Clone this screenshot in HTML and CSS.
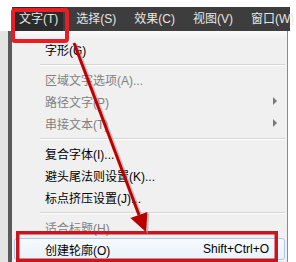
FILE: index.html
```html
<!DOCTYPE html>
<html>
<head>
<meta charset="utf-8">
<link rel="stylesheet" href="styles.css">
</head>
<body>
<div class="top"></div>
<div class="menubar">
  <span class="mb-item active">文字(T)</span>
  <span class="mb-item">选择(S)</span>
  <span class="mb-item">效果(C)</span>
  <span class="mb-item">视图(V)</span>
  <span class="mb-item">窗口(W)</span>
</div>
<div class="body">
  <div class="gutter"></div>
  <div class="panel">
    <div class="item">字形(G)</div>
    <div class="sep"></div>
    <div class="item disabled">区域文字选项(A)...</div>
    <div class="item disabled">路径文字(P)<span class="arrow"></span></div>
    <div class="item disabled">串接文本(T)<span class="arrow"></span></div>
    <div class="sep"></div>
    <div class="item">复合字体(I)...</div>
    <div class="item">避头尾法则设置(K)...</div>
    <div class="item">标点挤压设置(J)...</div>
    <div class="sep"></div>
    <div class="item disabled">适合标题(H)</div>
    <div class="item hot">创建轮廓(O)<span class="shortcut">Shift+Ctrl+O</span></div>
  </div>
  <div class="right"></div>
</div>
<svg class="overlay" width="296" height="262" viewBox="0 0 296 262">
  <rect x="13" y="10" width="54" height="31" rx="2" fill="none" stroke="#ec1c24" stroke-width="4"/>
  <rect x="17.75" y="232.75" width="258.5" height="27.5" fill="none" stroke="#c8161e" stroke-width="3.5"/>
  <line x1="76" y1="44" x2="141" y2="216" stroke="#9a9a9a" stroke-opacity="0.55" stroke-width="3"/>
  <polygon points="148,234 149.5,213 132.5,219" fill="#9a9a9a" fill-opacity="0.55"/>
  <line x1="74" y1="43" x2="139" y2="215" stroke="#c00000" stroke-width="3"/>
  <polygon points="146,232 147.4,212 130.4,218" fill="#b80000"/>
</svg>
</body>
</html>
```
FILE: styles.css
```css
html, body {
  margin: 0;
  padding: 0;
  background: #ffffff;
}
body {
  position: relative;
  width: 296px;
  height: 262px;
  overflow: hidden;
  font-family: "Liberation Sans", "Noto Sans CJK SC", sans-serif;
  font-size: 12px;
}
.top {
  height: 7px;
}
.menubar {
  margin-left: 12px;
  width: 276px;
  height: 24px;
  background: #3d3d3d;
  display: flex;
  align-items: center;
  gap: 8px;
  padding-left: 2px;
  box-sizing: content-box;
}
.mb-item {
  padding: 0 5px;
  height: 24px;
  line-height: 24px;
  color: #e6e6e6;
  white-space: nowrap;
}
.mb-item.active {
  background: #2b2b2b;
}
.body {
  display: flex;
  height: 231px;
}
.gutter {
  width: 12px;
  background: linear-gradient(to right, #e4e4e4 0, #e4e4e4 8px, #5a5a5a 8px, #5a5a5a 12px);
}
.panel {
  width: 276px;
  border-right: 1px solid #8c8c8c;
  background: linear-gradient(to bottom, #fafafa 0, #f0f0f0 8px, #f0f0f0 100%);
  padding-top: 7px;
  box-sizing: border-box;
}
.right {
  flex: 1;
  background: #ffffff;
}
.item {
  height: 22px;
  display: flex;
  align-items: center;
  padding: 0 18px 0 33px;
  color: #000000;
  white-space: nowrap;
  box-sizing: border-box;
}
.item.disabled {
  color: #808080;
}
.arrow {
  margin-left: auto;
  margin-right: -8px;
  width: 0;
  height: 0;
  border-left: 4px solid #7a7a7a;
  border-top: 4px solid transparent;
  border-bottom: 4px solid transparent;
}
.sep {
  height: 8px;
  padding-top: 4px;
  box-sizing: border-box;
}
.sep::before {
  content: "";
  display: block;
  margin-left: 28px;
  margin-right: 2px;
  border-top: 1px solid #d5d5d5;
  border-bottom: 1px solid #ffffff;
}
.item.hot {
  margin: 0 2px;
  padding: 0 15px 0 30px;
  border: 1px solid #a9c9ee;
  border-radius: 3px;
  background: linear-gradient(to bottom, #f7fafe, #e9f1fb);
}
.shortcut {
  margin-left: auto;
}
.overlay {
  position: absolute;
  left: 0;
  top: 0;
  pointer-events: none;
}
```
